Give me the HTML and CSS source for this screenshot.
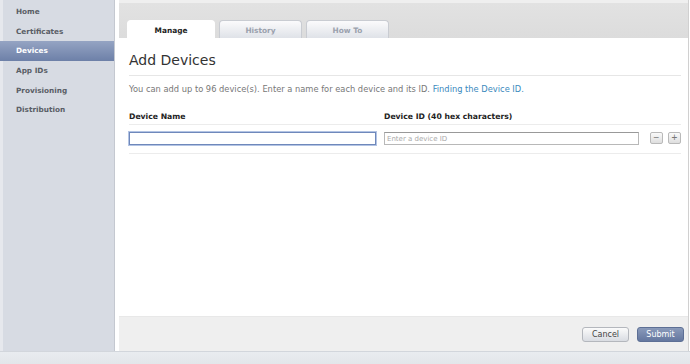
FILE: index.html
```html
<!DOCTYPE html>
<html lang="en">
<head>
    <meta charset="UTF-8">
    <title>Add Devices</title>
    <link rel="stylesheet" href="styles.css">
</head>
<body>
    <div class="page">
        <div class="sidebar">
            <ul class="nav">
                <li><a href="#">Home</a></li>
                <li><a href="#">Certificates</a></li>
                <li class="active"><a href="#">Devices</a></li>
                <li><a href="#">App IDs</a></li>
                <li><a href="#">Provisioning</a></li>
                <li><a href="#">Distribution</a></li>
            </ul>
        </div>

        <div class="main">
            <div class="tabs">
                <a class="tab active" href="#">Manage</a>
                <a class="tab" href="#">History</a>
                <a class="tab" href="#">How To</a>
            </div>

            <div class="content">
                <h1>Add Devices</h1>
                <p class="intro">You can add up to 96 device(s). Enter a name for each device and its ID. <a href="#">Finding the Device ID.</a></p>

                <div class="row head">
                    <div class="col-name">Device Name</div>
                    <div class="col-id">Device ID (40 hex characters)</div>
                </div>
                <div class="row fields">
                    <div class="col-name"><input type="text" class="name-input focused"></div>
                    <div class="col-id"><input type="text" class="id-input" placeholder="Enter a device ID"></div>
                    <div class="row-btns">
                        <button class="small-btn">&minus;</button>
                        <button class="small-btn">+</button>
                    </div>
                </div>
            </div>

            <div class="footer">
                <button class="btn cancel">Cancel</button>
                <button class="btn submit">Submit</button>
            </div>
        </div>
    </div>
    <div class="bottom-bar"></div>
</body>
</html>
```

FILE: styles.css
```css
body {
    margin: 0;
    padding: 0;
    font-family: "DejaVu Sans", Verdana, sans-serif;
    background: #fff;
    width: 690px;
    height: 364px;
    overflow: hidden;
}

.page {
    display: flex;
    height: 351px;
}

.sidebar {
    width: 111px;
    background: #d7dbe3;
    border-left: 3px solid #e6e8ed;
    border-right: 1px solid #c4c8d0;
    padding-top: 2px;
}

.nav {
    list-style: none;
    margin: 0;
    padding: 0;
}

.nav li a {
    display: block;
    height: 19.7px;
    line-height: 20px;
    padding-left: 13px;
    font-size: 7.3px;
    font-weight: bold;
    color: #5a5e66;
    text-decoration: none;
}

.nav li.active a {
    background: linear-gradient(#95a4c3, #6d80a8);
    color: #fff;
    margin-left: -3px;
    padding-left: 16px;
}

.main {
    flex: 1;
    display: flex;
    flex-direction: column;
    margin-left: 4px;
    border-right: 1px solid #d0d0d0;
    margin-right: 1px;
}

.tabs {
    height: 38px;
    background: linear-gradient(#efefef 0, #efefef 3px, #e2e2e2 3px, #dcdcdc);
    display: flex;
    align-items: flex-end;
    gap: 4px;
    padding-left: 8px;
    box-sizing: border-box;
}

.tab {
    width: 83px;
    height: 18px;
    line-height: 19px;
    text-align: center;
    font-size: 7.4px;
    font-weight: bold;
    color: #9aa1ad;
    text-decoration: none;
    background: linear-gradient(#fbfbfc, #dfe2e8);
    border: 1px solid #c9ccd2;
    border-bottom: none;
    border-radius: 4px 4px 0 0;
    box-sizing: border-box;
}

.tab.active {
    background: #fff;
    border-color: #fff;
    color: #222;
    width: 88px;
}

.content {
    flex: 1;
    background: #fff;
    padding: 0 7px 0 10px;
}

.content h1 {
    margin: 0;
    padding: 14px 0 7px;
    font-size: 14px;
    font-weight: normal;
    color: #333;
    border-bottom: 1px solid #e6e6e6;
}

.intro {
    margin: 0;
    padding: 8px 0 0;
    font-size: 8.3px;
    color: #777;
}

.intro a {
    color: #3a89bd;
    text-decoration: none;
}

.row {
    display: flex;
    align-items: center;
}

.row.head {
    margin-top: 14px;
    height: 16px;
    font-size: 7.7px;
    font-weight: bold;
    color: #222;
    border-bottom: 1px solid #ececec;
}

.row.fields {
    height: 29px;
    align-items: flex-start;
    padding-top: 7px;
    box-sizing: border-box;
    border-bottom: 1px solid #ececec;
}

.col-name {
    width: 255px;
}

.col-id {
    width: 260px;
}

.col-name input,
.col-id input {
    display: block;
    height: 13px;
    box-sizing: border-box;
    font-family: "DejaVu Sans", Verdana, sans-serif;
    font-size: 7px;
    padding: 0 2px;
    border: 1px solid #b8b8b8;
    border-top-color: #999;
    outline: none;
}

.name-input {
    width: 247px;
}

.name-input.focused {
    border: 1px solid #6f88bb;
    box-shadow: 0 0 0 1px #b3c4e4;
}

.id-input {
    width: 255px;
}

.id-input::placeholder {
    color: #aaa;
}

.row-btns {
    display: flex;
    gap: 5px;
    margin-left: 6px;
}

.small-btn {
    width: 13px;
    height: 12px;
    padding: 0;
    font-size: 10px;
    line-height: 10px;
    color: #777;
    background: linear-gradient(#fafafa, #dedede);
    border: 1px solid #b9b9b9;
    border-radius: 2px;
}

.footer {
    height: 34px;
    background: #efefef;
    border-top: 1px solid #e8e8e8;
    display: flex;
    align-items: center;
    justify-content: flex-end;
    gap: 8px;
    padding-right: 4px;
}

.btn {
    height: 15px;
    width: 47px;
    padding: 0;
    font-family: "DejaVu Sans", Verdana, sans-serif;
    font-size: 8px;
    border-radius: 3px;
}

.cancel {
    color: #444;
    background: linear-gradient(#fbfbfb, #d9dce2);
    border: 1px solid #b4b7bd;
}

.submit {
    color: #fff;
    background: linear-gradient(#8a9aba, #64779f);
    border: 1px solid #5d6f95;
}

.bottom-bar {
    height: 13px;
    background: linear-gradient(#d2d6dc 0, #d2d6dc 1px, #e9ecf0 1px, #e3e6ea);
}
```
